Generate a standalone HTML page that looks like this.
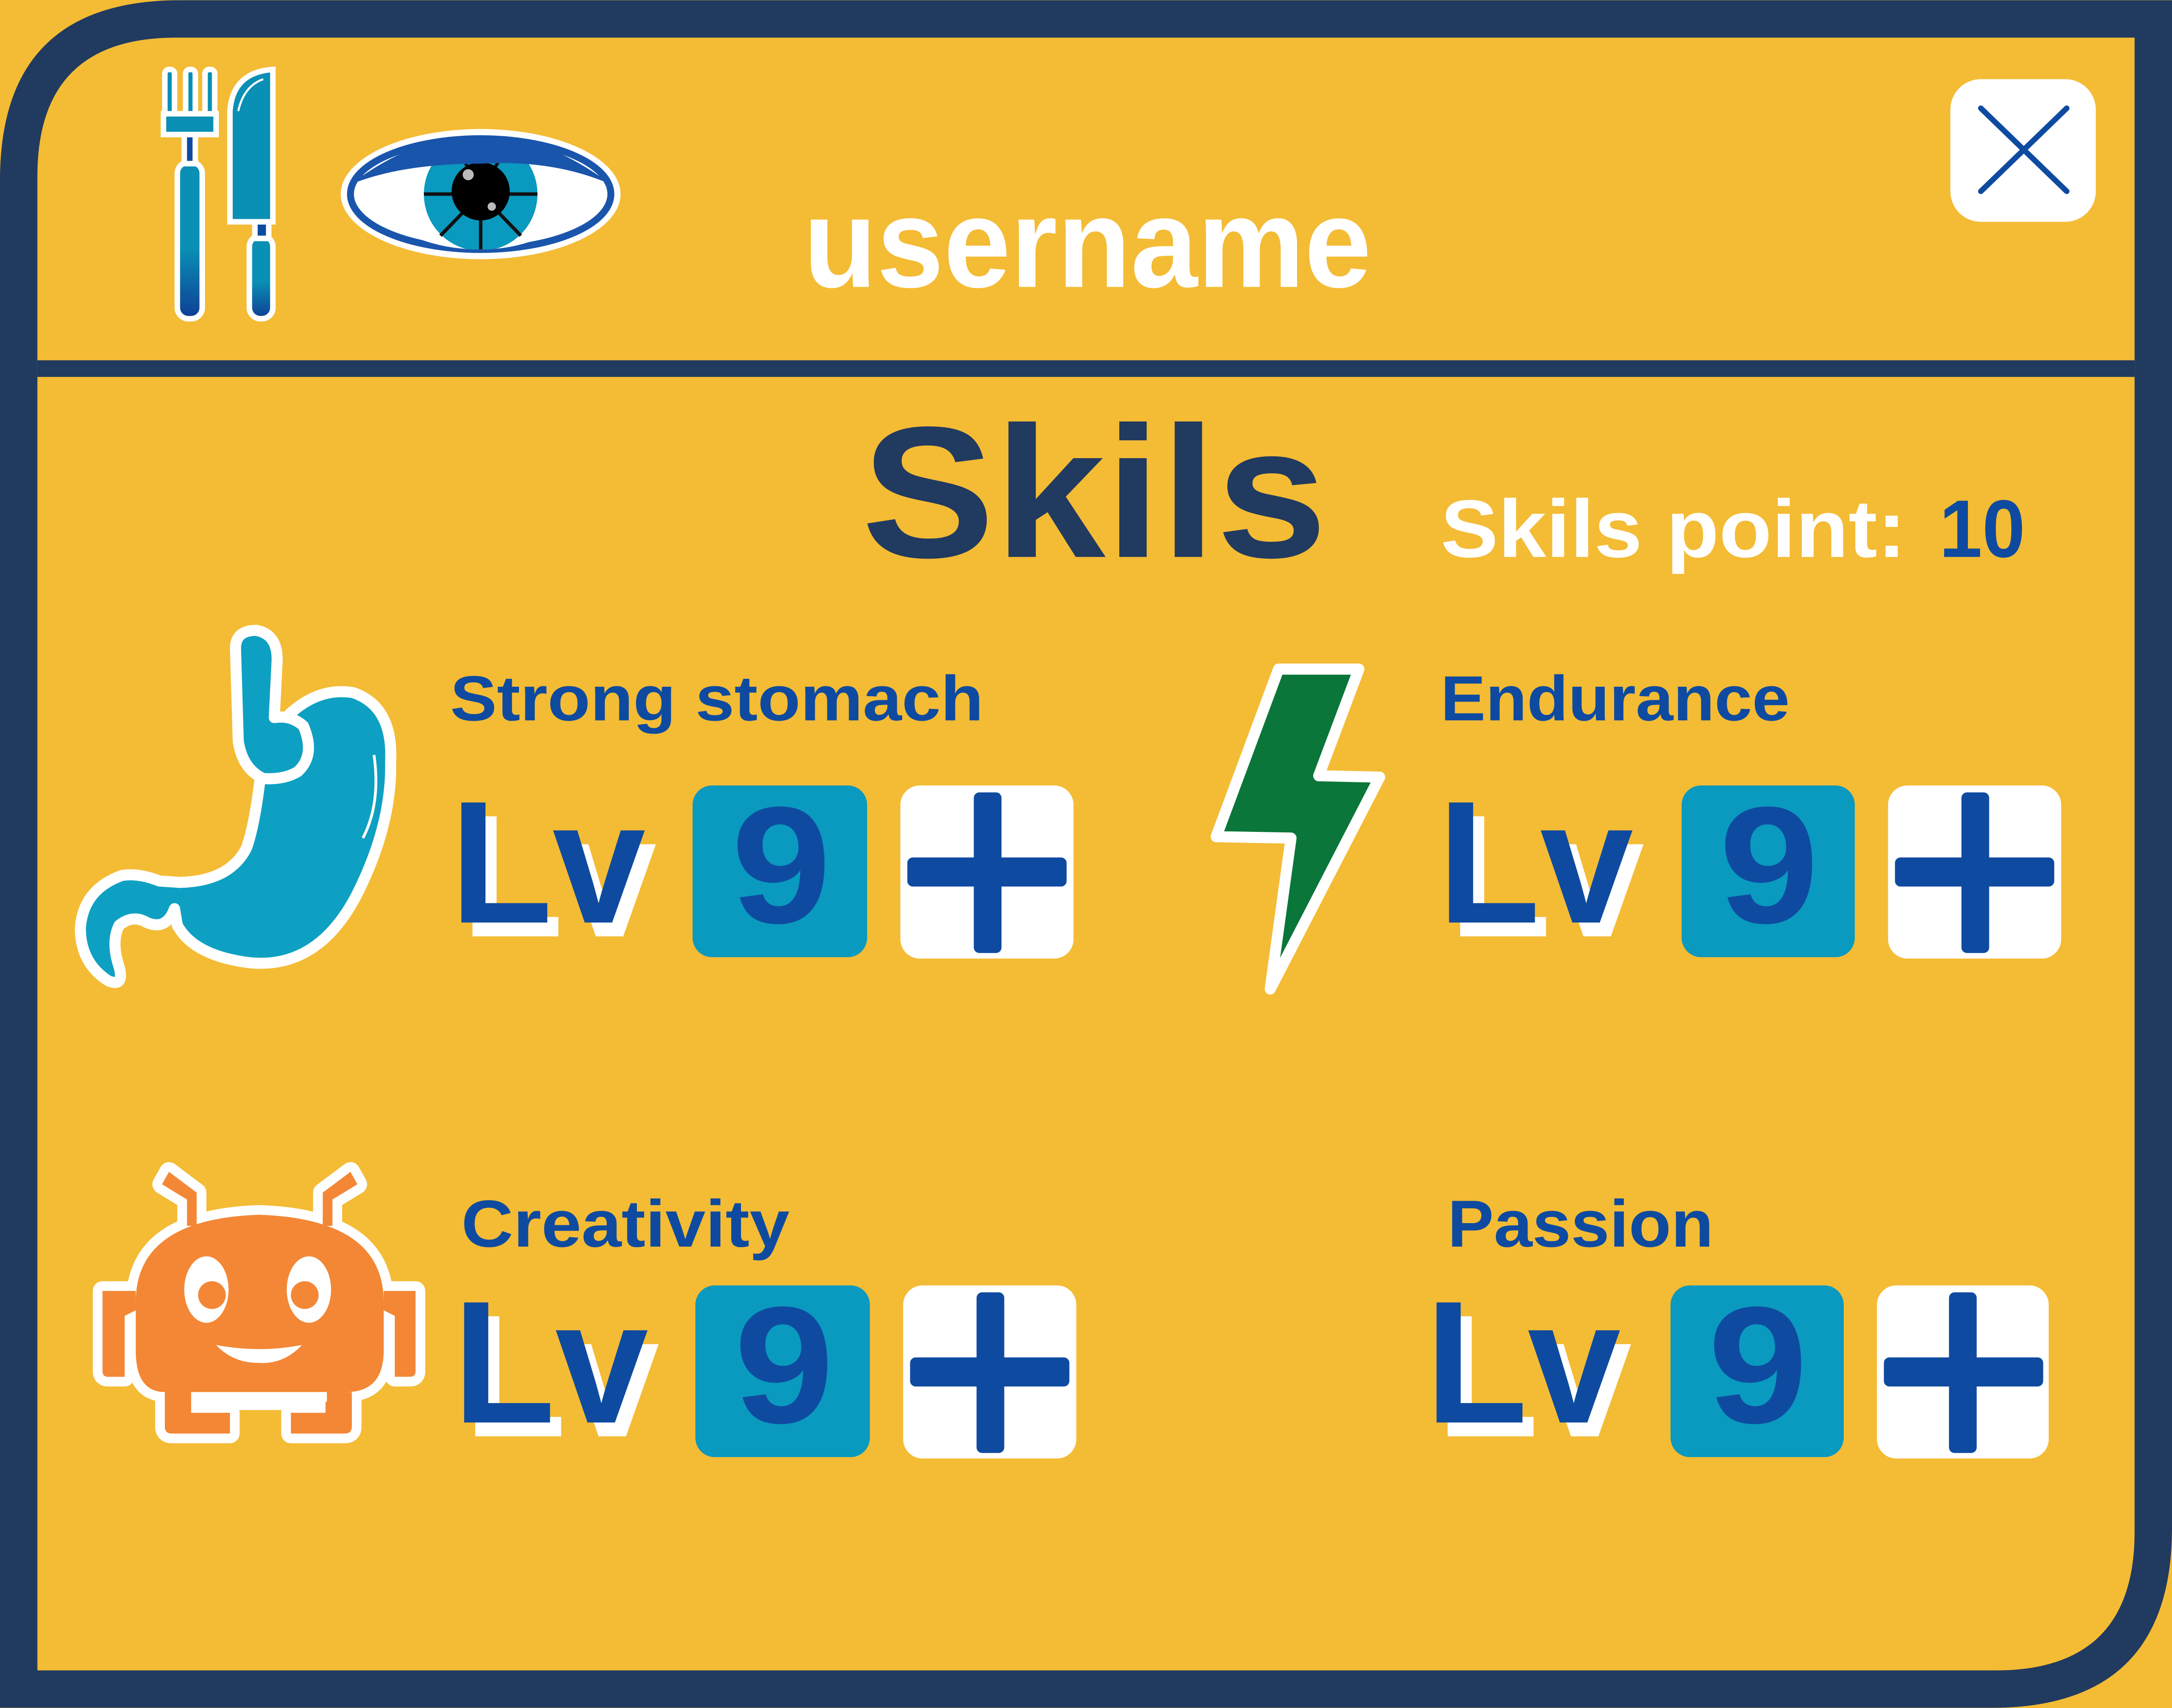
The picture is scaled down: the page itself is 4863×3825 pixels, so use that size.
<!DOCTYPE html>
<html><head><meta charset="utf-8"><style>
html,body{margin:0;padding:0;background:#F4BB35;}
svg{display:block}
text{font-family:"Liberation Sans",sans-serif;font-weight:bold;}
</style></head><body>
<svg width="4863" height="3825" viewBox="0 0 1568 1233" xmlns="http://www.w3.org/2000/svg">
<defs>
<linearGradient id="hg" x1="0" y1="0" x2="0" y2="1"><stop offset="0.55" stop-color="#0A8FB5"/><stop offset="1" stop-color="#0E3E95"/></linearGradient>
<clipPath id="eyeclip"><path d="M256,138 Q347,75 438,135 Q400,180 347,180 Q290,180 256,138Z"/></clipPath>
</defs>
<path d="M130,0 H1568 V1103 Q1568,1233 1438,1233 H0 V130 Q0,0 130,0Z" fill="#213A5F"/>
<path d="M127,27 H1541 V1106 Q1541,1206 1441,1206 H27 V127 Q27,27 127,27Z" fill="#F4BB35"/>
<rect x="27" y="260" width="1514" height="12" fill="#213A5F"/>

<g stroke="#fff" stroke-width="4">
<rect x="128" y="117" width="18" height="113" rx="8" fill="url(#hg)"/>
<rect x="133" y="96" width="8" height="22" fill="#0E4BA0"/>
<rect x="119" y="50" width="7" height="35" rx="3" fill="#0A8FB5"/>
<rect x="134" y="50" width="7" height="35" rx="3" fill="#0A8FB5"/>
<rect x="148" y="50" width="7" height="35" rx="3" fill="#0A8FB5"/>
<rect x="118" y="82" width="38" height="15" fill="#0A8FB5"/>
<path d="M166,160 V80 Q168,52 197,50 V160Z" fill="#0A8FB5"/>
<rect x="180" y="170" width="17" height="60" rx="8" fill="url(#hg)"/>
<rect x="184" y="160" width="10" height="12" fill="#0E4BA0"/>
</g>
<path d="M172,80 Q176,62 190,57" stroke="#fff" stroke-width="1.5" fill="none"/>

<ellipse cx="347" cy="140" rx="101" ry="47" fill="#fff"/>
<ellipse cx="347" cy="140" rx="94" ry="40" fill="#fff" stroke="#1A55AC" stroke-width="5"/>
<g clip-path="url(#eyeclip)">
<rect x="240" y="90" width="220" height="100" fill="#fff"/>
<circle cx="347" cy="140" r="41" fill="#0A99BF"/>
<g stroke="#111" stroke-width="2.5"><line x1="306" y1="140" x2="388" y2="140"/><line x1="347" y1="140" x2="347" y2="185"/><line x1="347" y1="140" x2="318" y2="170"/><line x1="347" y1="140" x2="376" y2="170"/><line x1="347" y1="140" x2="330" y2="105"/><line x1="347" y1="140" x2="366" y2="105"/></g>
<circle cx="347" cy="138" r="21" fill="#000"/>
<circle cx="338" cy="126" r="4" fill="#bbb"/><circle cx="355" cy="149" r="3" fill="#bbb"/>
</g>
<path d="M253,133 Q347,62 441,133 Q400,115 347,118 Q290,118 253,133Z" fill="#1A55AC"/>

<text x="580" y="207" font-size="92" fill="#fff" textLength="410" lengthAdjust="spacingAndGlyphs">username</text>

<rect x="1408" y="57" width="105" height="103" rx="22" fill="#fff"/>
<g stroke="#0E4BA0" stroke-width="4" stroke-linecap="round"><line x1="1430" y1="78" x2="1492" y2="138"/><line x1="1492" y1="78" x2="1430" y2="138"/></g>

<text x="622" y="402" font-size="135" fill="#213A5F" textLength="336" lengthAdjust="spacingAndGlyphs">Skils</text>
<text x="1040" y="402" font-size="59" fill="#fff" textLength="336" lengthAdjust="spacingAndGlyphs">Skils point:</text>
<text x="1400" y="402" font-size="59" fill="#0E4BA0" textLength="62" lengthAdjust="spacingAndGlyphs">10</text>

<g fill="#0E4BA0">
<text x="325" y="520" font-size="46" textLength="385" lengthAdjust="spacingAndGlyphs">Strong stomach</text>
<text x="1040" y="520" font-size="46" textLength="252" lengthAdjust="spacingAndGlyphs">Endurance</text>
<text x="333" y="900" font-size="48" textLength="237" lengthAdjust="spacingAndGlyphs">Creativity</text>
<text x="1045" y="900" font-size="48" textLength="192" lengthAdjust="spacingAndGlyphs">Passion</text>
</g>

<g>
<text x="333" y="676" font-size="126" fill="#fff" textLength="141" lengthAdjust="spacingAndGlyphs">Lv</text>
<text x="325" y="666" font-size="126" fill="#0E4BA0" textLength="141" lengthAdjust="spacingAndGlyphs">Lv</text>
<rect x="500" y="567" width="126" height="124" rx="14" fill="#0A99BF"/>
<text x="528" y="666" font-size="120" fill="#0E4BA0" textLength="72" lengthAdjust="spacingAndGlyphs">9</text>
<rect x="650" y="567" width="125" height="125" rx="14" fill="#fff"/>
<rect x="703" y="572" width="20" height="116" rx="4" fill="#0E4BA0"/><rect x="655" y="619" width="115" height="21" rx="4" fill="#0E4BA0"/>
</g>
<g>
<text x="1046" y="676" font-size="126" fill="#fff" textLength="141" lengthAdjust="spacingAndGlyphs">Lv</text>
<text x="1038" y="666" font-size="126" fill="#0E4BA0" textLength="141" lengthAdjust="spacingAndGlyphs">Lv</text>
<rect x="1214" y="567" width="125" height="124" rx="14" fill="#0A99BF"/>
<text x="1241" y="666" font-size="120" fill="#0E4BA0" textLength="72" lengthAdjust="spacingAndGlyphs">9</text>
<rect x="1363" y="567" width="125" height="125" rx="14" fill="#fff"/>
<rect x="1416" y="572" width="20" height="116" rx="4" fill="#0E4BA0"/><rect x="1368" y="619" width="115" height="21" rx="4" fill="#0E4BA0"/>
</g>
<g>
<text x="335" y="1037" font-size="126" fill="#fff" textLength="141" lengthAdjust="spacingAndGlyphs">Lv</text>
<text x="327" y="1027" font-size="126" fill="#0E4BA0" textLength="141" lengthAdjust="spacingAndGlyphs">Lv</text>
<rect x="502" y="928" width="126" height="124" rx="14" fill="#0A99BF"/>
<text x="530" y="1027" font-size="120" fill="#0E4BA0" textLength="72" lengthAdjust="spacingAndGlyphs">9</text>
<rect x="652" y="928" width="125" height="125" rx="14" fill="#fff"/>
<rect x="705" y="933" width="20" height="116" rx="4" fill="#0E4BA0"/><rect x="657" y="980" width="115" height="21" rx="4" fill="#0E4BA0"/>
</g>
<g>
<text x="1037" y="1037" font-size="126" fill="#fff" textLength="141" lengthAdjust="spacingAndGlyphs">Lv</text>
<text x="1029" y="1027" font-size="126" fill="#0E4BA0" textLength="141" lengthAdjust="spacingAndGlyphs">Lv</text>
<rect x="1206" y="928" width="125" height="124" rx="14" fill="#0A99BF"/>
<text x="1233" y="1027" font-size="120" fill="#0E4BA0" textLength="72" lengthAdjust="spacingAndGlyphs">9</text>
<rect x="1355" y="928" width="124" height="125" rx="14" fill="#fff"/>
<rect x="1407" y="933" width="20" height="116" rx="4" fill="#0E4BA0"/><rect x="1360" y="980" width="115" height="21" rx="4" fill="#0E4BA0"/>
</g>

<path d="M923,483 L981,483 L952,560 L996,561 L917,714 L932,605 L878,604Z" fill="#0A7639" stroke="#fff" stroke-width="8" stroke-linejoin="round"/>

<!-- stomach -->
<path d="M200,525 Q225,495 255,500 Q284,510 282,550 Q283,595 258,645 Q230,700 180,695 Q140,690 128,668 L126,656 Q120,672 106,666 Q96,660 86,668 Q80,680 86,698 Q90,713 78,708 Q58,695 58,670 Q60,642 88,632 Q100,630 115,636 L130,637 Q166,636 178,612 Q184,595 188,560 Z" fill="#0EA0C2" stroke="#fff" stroke-width="8" stroke-linejoin="round"/>
<path d="M170,468 Q170,455 185,455 Q201,458 200,478 L198,518 Q210,516 219,524 Q228,545 215,557 Q205,563 190,562 Q175,555 172,535 Z" fill="#0EA0C2" stroke="#fff" stroke-width="8" stroke-linejoin="round"/>
<path d="M270,545 Q275,580 262,605" stroke="#fff" stroke-width="2" fill="none"/>

<g stroke="#fff" stroke-width="14" stroke-linejoin="round" fill="#F38735">
<path d="M117,855 L122,846 L142,861 L142,885 L135,885 L135,866 L117,855Z"/>
<path d="M258,855 L253,846 L233,861 L233,885 L240,885 L240,866 L258,855Z"/>
<path d="M98,940 Q98,880 187,877 Q277,880 277,940 L277,975 Q277,1005 250,1005 L254,1005 L254,1030 Q254,1035 249,1035 L210,1035 L210,1020 L235,1020 L235,1011 L138,1011 L138,1020 L166,1020 L166,1035 L124,1035 Q119,1035 119,1030 L119,1005 Q98,1005 98,975Z"/>
<path d="M98,932 L74,932 L74,990 Q74,994 78,994 L90,994 L90,950 L98,946Z"/>
<path d="M277,932 L300,932 L300,990 Q300,994 296,994 L285,994 L285,950 L277,946Z"/>
</g>
<g fill="#F38735">
<path d="M117,855 L122,846 L142,861 L142,885 L135,885 L135,866 L117,855Z"/>
<path d="M258,855 L253,846 L233,861 L233,885 L240,885 L240,866 L258,855Z"/>
<path d="M98,940 Q98,880 187,877 Q277,880 277,940 L277,975 Q277,1005 250,1005 L254,1005 L254,1030 Q254,1035 249,1035 L210,1035 L210,1020 L235,1020 L235,1011 L138,1011 L138,1020 L166,1020 L166,1035 L124,1035 Q119,1035 119,1030 L119,1005 Q98,1005 98,975Z"/>
<path d="M98,932 L74,932 L74,990 Q74,994 78,994 L90,994 L90,950 L98,946Z"/>
<path d="M277,932 L300,932 L300,990 Q300,994 296,994 L285,994 L285,950 L277,946Z"/>
</g>
<rect x="138" y="1005" width="98" height="7" fill="#fff"/>
<ellipse cx="149" cy="931" rx="16" ry="24" fill="#fff"/><ellipse cx="223" cy="931" rx="16" ry="24" fill="#fff"/>
<ellipse cx="153" cy="935" rx="10" ry="10" fill="#F38735"/><ellipse cx="220" cy="935" rx="10" ry="10" fill="#F38735"/>
<path d="M156,971 Q187,977 218,971 Q205,985 187,984 Q168,984 156,971Z" fill="#fff"/>
</svg>
</body></html>
